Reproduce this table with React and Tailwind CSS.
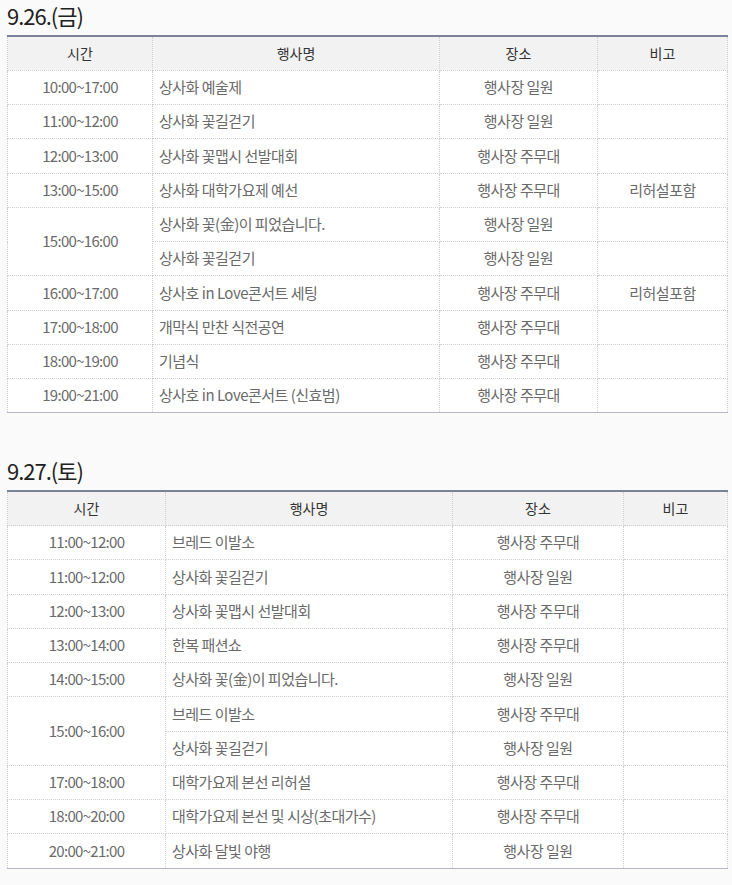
import React from "react";

const day1 = [
  { t: "10:00~17:00", rows: [["상사화 예술제", "행사장 일원", ""]] },
  { t: "11:00~12:00", rows: [["상사화 꽃길걷기", "행사장 일원", ""]] },
  { t: "12:00~13:00", rows: [["상사화 꽃맵시 선발대회", "행사장 주무대", ""]] },
  { t: "13:00~15:00", rows: [["상사화 대학가요제 예선", "행사장 주무대", "리허설포함"]] },
  { t: "15:00~16:00", rows: [["상사화 꽃(金)이 피었습니다.", "행사장 일원", ""], ["상사화 꽃길걷기", "행사장 일원", ""]] },
  { t: "16:00~17:00", rows: [["상사호 in Love콘서트 세팅", "행사장 주무대", "리허설포함"]] },
  { t: "17:00~18:00", rows: [["개막식 만찬 식전공연", "행사장 주무대", ""]] },
  { t: "18:00~19:00", rows: [["기념식", "행사장 주무대", ""]] },
  { t: "19:00~21:00", rows: [["상사호 in Love콘서트 (신효범)", "행사장 주무대", ""]] },
];

const day2 = [
  { t: "11:00~12:00", rows: [["브레드 이발소", "행사장 주무대", ""]] },
  { t: "11:00~12:00", rows: [["상사화 꽃길걷기", "행사장 일원", ""]] },
  { t: "12:00~13:00", rows: [["상사화 꽃맵시 선발대회", "행사장 주무대", ""]] },
  { t: "13:00~14:00", rows: [["한복 패션쇼", "행사장 주무대", ""]] },
  { t: "14:00~15:00", rows: [["상사화 꽃(金)이 피었습니다.", "행사장 일원", ""]] },
  { t: "15:00~16:00", rows: [["브레드 이발소", "행사장 주무대", ""], ["상사화 꽃길걷기", "행사장 일원", ""]] },
  { t: "17:00~18:00", rows: [["대학가요제 본선 리허설", "행사장 주무대", ""]] },
  { t: "18:00~20:00", rows: [["대학가요제 본선 및 시상(초대가수)", "행사장 주무대", ""]] },
  { t: "20:00~21:00", rows: [["상사화 달빛 야행", "행사장 일원", ""]] },
];

const cell = "border border-dotted border-[#cfcfcf] h-[34.25px] p-0 align-middle";

function Schedule({ title, data, widths, mt }) {
  return (
    <section className={mt}>
      <h2 className="text-[22px] leading-[30px] text-[#222] tracking-[-1px] mb-[5px] font-normal">{title}</h2>
      <table className="w-[720px] border-collapse table-fixed border-t-2 border-t-[#7c8398] border-b border-b-[#b4b8c3]">
        <colgroup>
          {widths.map((w, i) => (
            <col key={i} style={{ width: w }} />
          ))}
        </colgroup>
        <thead>
          <tr className="bg-[#f2f2f2] text-[#333] text-[14px]">
            <th className={`${cell} font-normal border-t-0`}>시간</th>
            <th className={`${cell} font-normal border-t-0`}>행사명</th>
            <th className={`${cell} font-normal border-t-0`}>장소</th>
            <th className={`${cell} font-normal border-t-0`}>비고</th>
          </tr>
        </thead>
        <tbody className="bg-white text-[15px] text-[#6a6a6a] tracking-[-0.5px]">
          {data.map((g, gi) =>
            g.rows.map((r, ri) => (
              <tr key={gi + "-" + ri}>
                {ri === 0 && (
                  <td rowSpan={g.rows.length} className={`${cell} text-center tracking-[-0.7px]`}>
                    {g.t}
                  </td>
                )}
                <td className={`${cell} text-left pl-[6px]`}>{r[0]}</td>
                <td className={`${cell} text-center`}>{r[1]}</td>
                <td className={`${cell} text-center`}>{r[2]}</td>
              </tr>
            ))
          )}
        </tbody>
      </table>
    </section>
  );
}

export default function App() {
  return (
    <div
      className="min-h-[885px] w-[732px] bg-[#fafafa] pl-[7px] pb-[20px]"
      style={{ fontFamily: '"Noto Sans CJK KR", "Noto Sans", sans-serif' }}
    >
      <Schedule title="9.26.(금)" data={day1} widths={[145, 287, 158, 130]} mt="pt-0" />
      <Schedule title="9.27.(토)" data={day2} widths={[158, 287, 171, 104]} mt="pt-[42px]" />
    </div>
  );
}
